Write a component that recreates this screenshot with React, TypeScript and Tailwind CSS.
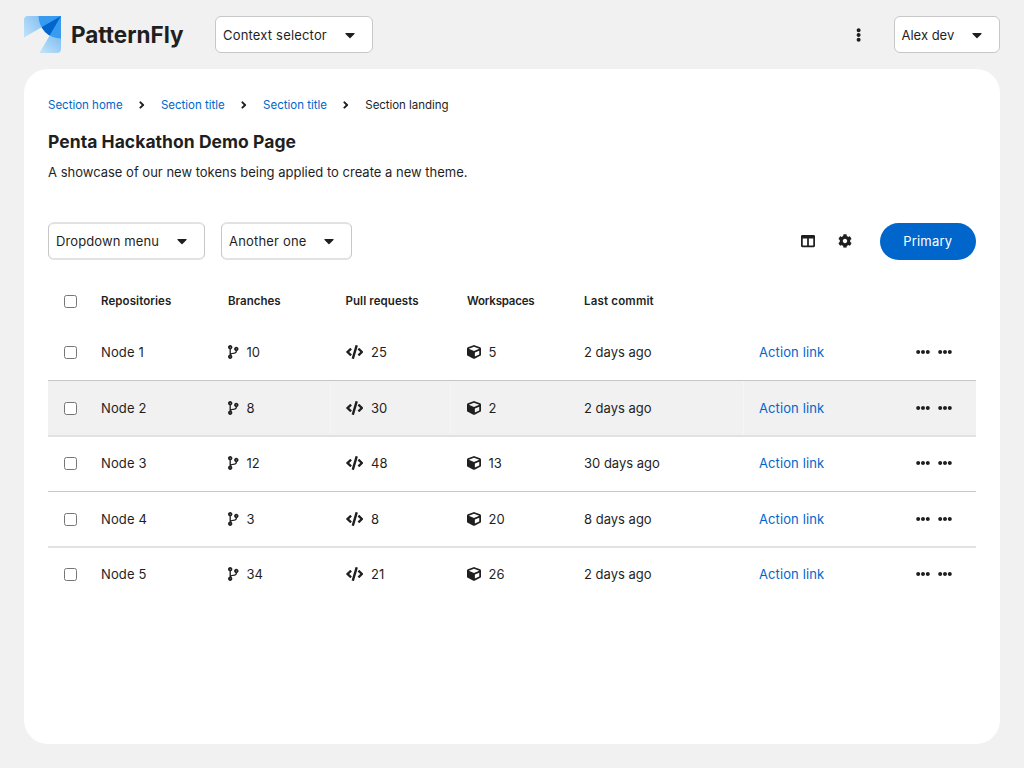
import type { ReactNode } from 'react';
import {
  FaAngleRight,
  FaCaretDown,
  FaCode,
  FaCodeBranch,
  FaCog,
  FaColumns,
  FaCube,
  FaEllipsisH,
  FaEllipsisV,
} from 'react-icons/fa';

function Logo() {
  return (
    <svg width="37" height="37" viewBox="0 0 37 37" aria-hidden="true">
      <defs>
        <linearGradient id="left" x1="0" y1="19" x2="22" y2="4" gradientUnits="userSpaceOnUse">
          <stop offset="0" stopColor="#bee1f9" />
          <stop offset="1" stopColor="#7dbcf2" />
        </linearGradient>
        <linearGradient id="bottom" x1="19" y1="37" x2="34" y2="18" gradientUnits="userSpaceOnUse">
          <stop offset="0" stopColor="#bee1f9" />
          <stop offset="1" stopColor="#7dbcf2" />
        </linearGradient>
        <clipPath id="circle">
          <circle cx="37" cy="0" r="22.5" />
        </clipPath>
      </defs>
      <path d="M4 0H37L0 21.5V4A4 4 0 0 1 4 0Z" fill="url(#left)" />
      <path d="M37 0V33A4 4 0 0 1 33 37H15.5Z" fill="url(#bottom)" />
      <g clipPath="url(#circle)">
        <path d="M0 0H37V37H15Z" fill="#389bf0" />
        <path d="M37 0L0 21.5V37H15.5Z" fill="#0066cc" />
      </g>
    </svg>
  );
}

function Toggle({ children, className }: { children: ReactNode; className: string }) {
  return (
    <button className={`flex items-center justify-between rounded-[6px] bg-white pr-[17px] pl-[7px] ${className}`}>
      <span>{children}</span>
      <FaCaretDown className="h-4 w-[10px]" />
    </button>
  );
}

function Checkbox() {
  return <span className="block size-[13px] rounded-[2.5px] border border-[#767676] bg-white" />;
}

const columns = 'grid grid-cols-[37px_127px_118px_120px_118px_175px_156px_77px] items-stretch';

const rows = [
  { name: 'Node 1', branches: 10, pulls: 25, spaces: 5, commit: '2 days ago', style: 'h-[56px] pb-px border-b border-[#c7c7c7]', seam: 'border-transparent' },
  { name: 'Node 2', branches: 8, pulls: 30, spaces: 2, commit: '2 days ago', style: 'h-[56px] border-b-2 border-[#e2e2e2] bg-[#f1f1f1]', seam: 'border-[#f5f5f5]' },
  { name: 'Node 3', branches: 12, pulls: 48, spaces: 13, commit: '30 days ago', style: 'h-[55px] pb-[2px] border-b border-[#c7c7c7]', seam: 'border-transparent' },
  { name: 'Node 4', branches: 3, pulls: 8, spaces: 20, commit: '8 days ago', style: 'h-[56px] border-b-2 border-[#e2e2e2]', seam: 'border-transparent' },
  { name: 'Node 5', branches: 34, pulls: 21, spaces: 26, commit: '2 days ago', style: 'h-[54px] pb-[2px]', seam: 'border-transparent' },
];

function Crumb({ children }: { children: ReactNode }) {
  return (
    <>
      <a className="text-[#0066cc]">{children}</a>
      <FaAngleRight className="mx-[15.4px] h-[12px] w-[7.5px]" />
    </>
  );
}

export default function App() {
  return (
    <div className="flex h-screen w-screen flex-col bg-[#f1f1f1] px-6 pb-6 font-['Inter','Noto_Sans',sans-serif] text-[13px] leading-5 text-[#1f1f1f]">
      <header className="flex h-[69px] shrink-0 items-center">
        <Logo />
        <span className="ml-[9px] w-[135px] pl-px text-[22.5px] font-bold">PatternFly</span>
        <Toggle className="ml-[10px] h-[37px] w-[158px] border border-[#c7c7c7] tracking-[0.18px]">Context selector</Toggle>
        <FaEllipsisV className="ml-auto h-[14px] w-[5.25px]" />
        <Toggle className="ml-[32px] h-[37px] w-[106.5px] border border-[#c7c7c7]">Alex dev</Toggle>
      </header>

      <main className="flex min-h-0 flex-1 flex-col rounded-[24px] bg-white px-6 pt-[26px]">
        <nav className="flex h-5 items-center text-[11.5px]">
          <Crumb>Section home</Crumb>
          <Crumb>Section title</Crumb>
          <Crumb>Section title</Crumb>
          <span className="tracking-[-0.05px]">Section landing</span>
        </nav>
        <h1 className="mt-[15px] text-[17.5px] leading-6 font-bold tracking-[0.04px]">Penta Hackathon Demo Page</h1>
        <p className="mt-[8px]">A showcase of our new tokens being applied to create a new theme.</p>

        <div className="mt-[40px] flex h-[38px] items-center">
          <Toggle className="h-[38px] w-[157px] border-x border-y-2 border-x-[#c7c7c7] border-y-[#e2e2e2] tracking-[0.1px]">Dropdown menu</Toggle>
          <Toggle className="ml-4 h-[38px] w-[131px] border-x border-y-2 border-x-[#c7c7c7] border-y-[#e2e2e2] tracking-[0.18px]">Another one</Toggle>
          <FaColumns size={14} className="ml-auto" />
          <FaCog size={14} className="ml-[23px]" />
          <button className="ml-[27.5px] h-[37px] w-[96.5px] rounded-full bg-[#0066cc] tracking-[0.2px] text-white">Primary</button>
        </div>

        <div className="mt-[16px]">
          <div className={`${columns} h-[49px] text-[11.5px] font-semibold`}>
            <div className="flex items-center pl-4 pt-px"><Checkbox /></div>
            <div className="flex items-center pl-4 tracking-[0.08px]">Repositories</div>
            <div className="flex items-center pl-4">Branches</div>
            <div className="flex items-center pl-[15.5px] tracking-[0.08px]">Pull requests</div>
            <div className="flex items-center pl-[17px] tracking-[-0.2px]">Workspaces</div>
            <div className="flex items-center pl-4 tracking-[0.18px]">Last commit</div>
          </div>
          {rows.map((r) => (
            <div key={r.name} className={`${columns} ${r.style}`}>
              <div className="flex items-center pl-4"><Checkbox /></div>
              <div className="flex items-center pl-4 tracking-[0.12px]">{r.name}</div>
              <div className="flex items-center gap-[8px] pl-4"><FaCodeBranch className="h-[14px] w-[10.5px]" />{r.branches}</div>
              <div className={`flex items-center gap-[8px] border-l pl-[14.5px] ${r.seam}`}><FaCode className="h-[14px] w-[17.5px]" />{r.pulls}</div>
              <div className={`flex items-center gap-[8px] border-l pl-[15.5px] ${r.seam}`}><FaCube size={14} />{r.spaces}</div>
              <div className="flex items-center pl-4">{r.commit}</div>
              <div className={`flex items-center border-l pl-[15px] tracking-[0.1px] text-[#0066cc] ${r.seam}`}>Action link</div>
              <div className="flex items-center justify-end gap-[8px] pr-[24px]">
                <FaEllipsisH size={14} />
                <FaEllipsisH size={14} />
              </div>
            </div>
          ))}
        </div>
      </main>
    </div>
  );
}
